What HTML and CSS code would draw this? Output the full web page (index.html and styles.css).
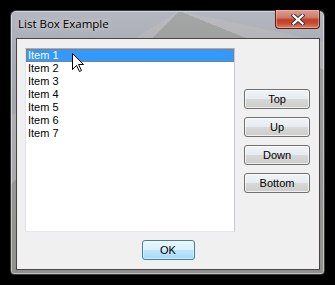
FILE: index.html
```html
<!DOCTYPE html>
<html lang="en">
<head>
    <meta charset="UTF-8">
    <title>List Box Example</title>
    <link rel="stylesheet" href="styles.css">
</head>
<body>
    <div class="window">
        <div class="titlebar">
            <span class="title">List Box Example</span>
            <div class="close-btn">
                <svg width="14" height="11" viewBox="0 0 14 11">
                    <path d="M2.5 1.5 L11.5 9.5 M11.5 1.5 L2.5 9.5" stroke="#3a3a3a" stroke-width="4.2" stroke-linecap="square"/>
                    <path d="M2.5 1.5 L11.5 9.5 M11.5 1.5 L2.5 9.5" stroke="#fff" stroke-width="2.2" stroke-linecap="square"/>
                </svg>
            </div>
        </div>
        <div class="client">
            <div class="main">
                <ul class="listbox">
                    <li class="selected">Item 1</li>
                    <li>Item 2</li>
                    <li>Item 3</li>
                    <li>Item 4</li>
                    <li>Item 5</li>
                    <li>Item 6</li>
                    <li>Item 7</li>
                </ul>
                <div class="buttons">
                    <button class="btn">Top</button>
                    <button class="btn">Up</button>
                    <button class="btn">Down</button>
                    <button class="btn">Bottom</button>
                </div>
            </div>
            <div class="footer">
                <button class="btn btn-default">OK</button>
            </div>
        </div>
    </div>

    <!-- mouse pointer over the first item -->
    <svg class="cursor" width="13" height="20" viewBox="0 0 13 20">
        <path d="M0.5 0.5 L0.5 16.5 L4.5 12.5 L7.5 18.5 L9.5 17.5 L6.5 11.5 L11.5 11.5 Z" fill="#fff" stroke="#000" stroke-width="1"/>
    </svg>
</body>
</html>
```

FILE: styles.css
```css
html, body {
    margin: 0;
    height: 100%;
}

body {
    background-color: #000;
    padding: 10px;
    box-sizing: border-box;
    overflow: hidden;
    position: relative;
    font-family: "Liberation Sans", Arial, sans-serif;
}

.window {
    width: 315px;
    height: 265px;
    box-sizing: border-box;
    border: 1px solid #3b3b3b;
    border-radius: 6px 6px 4px 4px;
    padding: 0 4px 4px 5px;
    display: flex;
    flex-direction: column;
    background:
        conic-gradient(from 180deg at 168px 0,
            rgba(130, 128, 110, 0.3) 0deg 44deg,
            rgba(215, 205, 190, 0.2) 44deg 58deg,
            transparent 58deg 282deg,
            rgba(215, 205, 190, 0.2) 282deg 292deg,
            rgba(130, 128, 110, 0.3) 292deg 360deg),
        linear-gradient(to bottom, #b4b7bf 0px, #a9acb4 40px, #96989c 100%);
    box-shadow: inset 0 0 0 1px rgba(255, 255, 255, 0.45);
}

.titlebar {
    height: 27px;
    display: flex;
    justify-content: space-between;
    align-items: flex-start;
    flex-shrink: 0;
}

.title {
    font-family: "Open Sans", "Noto Sans", sans-serif;
    font-size: 11.5px;
    color: #000;
    margin: 5px 0 0 2px;
    text-shadow: 0 0 6px rgba(255, 255, 255, 0.8);
}

.close-btn {
    width: 45px;
    height: 19px;
    margin-top: -1px;
    box-sizing: border-box;
    border: 1px solid #4a2620;
    border-top: none;
    border-radius: 0 0 4px 4px;
    background: linear-gradient(to bottom, #dc9e90 0%, #d07e6e 40%, #c23e28 55%, #c84c36 75%, #dc8460 100%);
    box-shadow: inset 0 0 0 1px rgba(255, 200, 190, 0.45);
    display: flex;
    justify-content: center;
    align-items: center;
}

.close-btn svg {
    display: block;
}

.client {
    flex: 1;
    background-color: #f0f0f0;
    border: 1px solid #4b4645;
    padding: 9px 0 0 8px;
    display: flex;
    flex-direction: column;
}

.main {
    display: flex;
    gap: 9px;
}

.listbox {
    list-style: none;
    margin: 0;
    padding: 0;
    width: 210px;
    height: 184px;
    box-sizing: border-box;
    background-color: #fff;
    border: 1px solid;
    border-color: #abadb3 #c9c6d6 #e3e9ef #e2e3ea;
}

.listbox li {
    height: 13px;
    line-height: 13px;
    font-size: 11px;
    padding-left: 2px;
    color: #000;
}

.listbox li.selected {
    background-color: #3399ff;
    color: #fff;
    outline: 1px dotted #c86a1a;
    outline-offset: -1px;
}

.buttons {
    display: flex;
    flex-direction: column;
    gap: 8px;
    padding-top: 41px;
}

.btn {
    width: 66px;
    height: 20px;
    padding: 0;
    font-family: "Liberation Sans", Arial, sans-serif;
    font-size: 11px;
    color: #000;
    border: 1px solid #707070;
    border-radius: 3px;
    background: linear-gradient(to bottom, #f2f4f6 0%, #e6ebf0 50%, #d8d9d8 50%, #cdcdcb 100%);
    box-shadow: inset 0 0 0 1px rgba(255, 255, 255, 0.7);
}

.footer {
    display: flex;
    justify-content: center;
    padding: 8px 8px 0 0;
}

.btn-default {
    width: 53px;
    border-color: #3c7fb1;
    background: linear-gradient(to bottom, #eaf6fd 0%, #d9f0fc 50%, #bee6fd 50%, #a7d9f5 100%);
    box-shadow: inset 0 0 0 1px rgba(255, 255, 255, 0.5);
}

.cursor {
    position: absolute;
    left: 72px;
    top: 53px;
}
```
